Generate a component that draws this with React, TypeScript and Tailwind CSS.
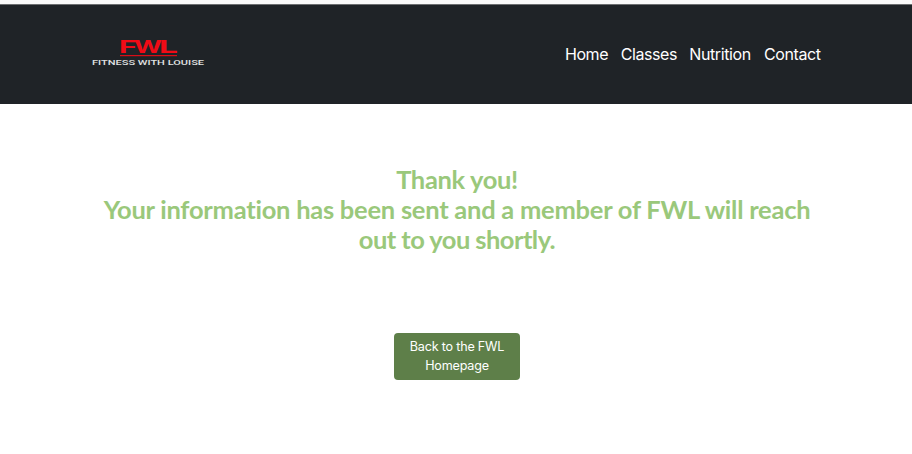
const links = [
  { label: "Home", style: "w-[43px]" },
  { label: "Classes", style: "w-[56px]" },
  { label: "Nutrition", style: "w-[62px]" },
  { label: "Contact", style: "w-[57px]" },
];

function Logo() {
  return (
    <svg className="h-[34px] w-[114px]" viewBox="0 0 114 34" role="img" aria-label="Fitness With Louise">
      <g fill="#f00b16" fontFamily="Inter, sans-serif" fontWeight="700" fontSize="17.6">
        <text x="28" y="17.8" textLength="18" lengthAdjust="spacingAndGlyphs">F</text>
        <text x="43" y="17.8" textLength="28" lengthAdjust="spacingAndGlyphs">W</text>
        <text x="68" y="17.8" textLength="19" lengthAdjust="spacingAndGlyphs">L</text>
      </g>
      <rect x="29" y="20" width="57" height="1.2" fill="#d90d17" />
      <text x="1" y="29.8" fill="#e0e1e2" fontFamily="Roboto, sans-serif" fontSize="8" fontWeight="500" textLength="112" lengthAdjust="spacingAndGlyphs">FITNESS WITH LOUISE</text>
    </svg>
  );
}

export default function App() {
  return (
    <div className="min-h-[454px] bg-white font-['Inter',sans-serif]">
      <div className="h-1 bg-[#fafafa]" />
      <header className="flex h-[100px] items-center justify-between border-t border-[#6d6f71] bg-[#1f2327] px-[91px]">
        <div className="pb-[6px]"><Logo /></div>
        <nav className="flex gap-[12.7px] pb-[2px] text-[16px] leading-6 tracking-[-0.4px] text-white">
          {links.map((link) => (
            <a key={link.label} href="#" className={`${link.style} whitespace-nowrap`}>{link.label}</a>
          ))}
        </nav>
      </header>
      <main className="flex flex-col items-center pt-[60px] pl-[2px]">
        <h1 className="flex flex-col items-center whitespace-nowrap font-['Lato',sans-serif] text-[25.5px] font-bold leading-[30px] text-[#9ac87b] [font-variant-ligatures:none]">
          <span className="tracking-[-0.35px]">Thank you!</span>
          <span className="tracking-[-0.25px]">Your information has been sent and a member of FWL will reach</span>
          <span className="tracking-[-0.55px]">out to you shortly.</span>
        </h1>
        <a href="#" className="mt-[79px] flex h-[47px] w-[126px] flex-col items-center justify-center rounded-[4px] bg-[#5e7f49] pb-[2px] text-[12.6px] leading-[19px] tracking-[-0.2px] text-white">
          <span>Back to the FWL</span>
          <span>Homepage</span>
        </a>
      </main>
    </div>
  );
}
